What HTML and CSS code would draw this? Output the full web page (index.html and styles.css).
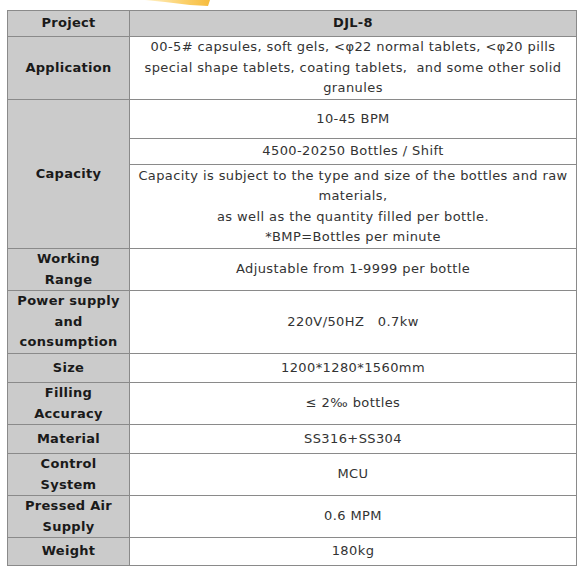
FILE: index.html
```html
<!DOCTYPE html>
<html>
<head>
<meta charset="utf-8">
<link rel="stylesheet" href="styles.css">
</head>
<body>
<div class="top">
  <svg class="ribbon" width="70" height="10" viewBox="0 0 70 10">
    <defs>
      <linearGradient id="g" x1="0" y1="0" x2="1" y2="0">
        <stop offset="0" stop-color="#fff1c8"/>
        <stop offset="0.6" stop-color="#fbd06a"/>
        <stop offset="1" stop-color="#f6bb3c"/>
      </linearGradient>
    </defs>
    <polygon points="0,0 65,0 63,6 45,5 20,2" fill="url(#g)"/>
  </svg>
</div>
<table class="spec">
  <tr class="h26 head">
    <th class="label">Project</th>
    <th class="value">DJL-8</th>
  </tr>
  <tr class="h63">
    <th class="label">Application</th>
    <td class="value">00-5# capsules, soft gels, &lt;φ22 normal tablets, &lt;φ20 pills<br>special shape tablets, coating tablets,&nbsp; and some other solid<br>granules</td>
  </tr>
  <tr class="h39">
    <th class="label" rowspan="3">Capacity</th>
    <td class="value">10-45 BPM</td>
  </tr>
  <tr class="h26">
    <td class="value">4500-20250 Bottles / Shift</td>
  </tr>
  <tr class="h84">
    <td class="value">Capacity is subject to the type and size of the bottles and raw<br>materials,<br>as well as the quantity filled per bottle.<br>*BMP=Bottles per minute</td>
  </tr>
  <tr class="h42">
    <th class="label">Working<br>Range</th>
    <td class="value">Adjustable from 1-9999 per bottle</td>
  </tr>
  <tr class="h63">
    <th class="label">Power supply<br>and<br>consumption</th>
    <td class="value">220V/50HZ&nbsp;&nbsp; 0.7kw</td>
  </tr>
  <tr class="h29">
    <th class="label">Size</th>
    <td class="value">1200*1280*1560mm</td>
  </tr>
  <tr class="h42">
    <th class="label">Filling<br>Accuracy</th>
    <td class="value">≤ 2‰ bottles</td>
  </tr>
  <tr class="h29">
    <th class="label">Material</th>
    <td class="value">SS316+SS304</td>
  </tr>
  <tr class="h42">
    <th class="label">Control<br>System</th>
    <td class="value">MCU</td>
  </tr>
  <tr class="h42">
    <th class="label">Pressed Air<br>Supply</th>
    <td class="value">0.6 MPM</td>
  </tr>
  <tr class="h28">
    <th class="label">Weight</th>
    <td class="value">180kg</td>
  </tr>
</table>
</body>
</html>
```

FILE: styles.css
```css
html, body {
  margin: 0;
  padding: 0;
  background: #ffffff;
}
body {
  font-family: "DejaVu Sans", Verdana, sans-serif;
  font-size: 13px;
  line-height: 20.5px;
  letter-spacing: 0.4px;
  color: #333333;
}
.top {
  height: 10px;
  padding-left: 145px;
  display: flex;
}
.ribbon {
  display: block;
}
.spec {
  margin-left: 7px;
  border-collapse: collapse;
  width: 570px;
  table-layout: fixed;
  border: 1px solid #7a7a7a;
}
.spec th, .spec td {
  border: 1px solid #8a8a8a;
  padding: 0;
  text-align: center;
  vertical-align: middle;
  white-space: nowrap;
}
.label {
  width: 121px;
  background: #cbcbcb;
  font-weight: bold;
  letter-spacing: 0.3px;
  color: #1a1a1a;
}
.value {
  font-weight: normal;
  color: #333333;
}
.head .value {
  background: #cbcbcb;
  font-weight: bold;
  letter-spacing: 0.3px;
  color: #1a1a1a;
}
.h26 > * { height: 25px; }
.h28 > * { height: 27px; }
.h29 > * { height: 28px; }
.h39 > * { height: 38px; }
.h42 > * { height: 41px; }
.h63 > * { height: 62px; }
.h84 > * { height: 83px; }
.spec th[rowspan] { height: auto; }
```
